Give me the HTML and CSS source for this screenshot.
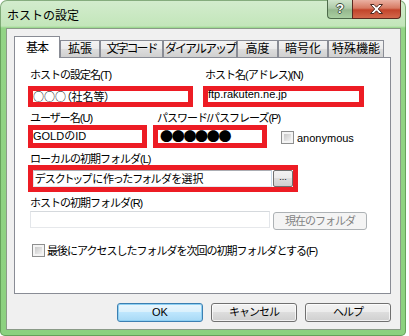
FILE: index.html
```html
<!DOCTYPE html>
<html lang="ja">
<head>
  <meta charset="UTF-8" />
  <title>ホストの設定</title>
  <link rel="stylesheet" href="styles.css">
</head>
<body>

<div class="window">
  <div class="titlebar">
    <span class="title">ホストの設定</span>
    <div class="caption">
      <div class="cap-help"><span>?</span></div>
      <div class="cap-close">
        <svg width="15" height="12" viewBox="0 0 15 12"><path d="M1.5 1.5 H5 L7.5 4.2 L10 1.5 H13.5 L9.3 6 L13.5 10.5 H10 L7.5 7.8 L5 10.5 H1.5 L5.7 6 Z" fill="#fff" stroke="#4b2a22" stroke-width="1"/></svg>
      </div>
    </div>
  </div>

  <div class="client">
    <ul class="tabs">
      <li class="tab active">基本</li>
      <li class="tab w-kakucho">拡張</li>
      <li class="tab kana w-moji">文字コード</li>
      <li class="tab kana w-dial">ダイアルアップ</li>
      <li class="tab w-kodo">高度</li>
      <li class="tab w-ango">暗号化</li>
      <li class="tab w-toku">特殊機能</li>
    </ul>

    <div class="panel">
      <div class="row row-host">
        <div class="field f-name">
          <div class="label">ホストの設定名(T)</div>
          <div class="mark mark-thin"><span class="val jp">○○○（社名等）</span></div>
        </div>
        <div class="field f-addr">
          <div class="label">ホスト名(アドレス)(N)</div>
          <div class="mark mark-thin"><span class="val">ftp.rakuten.ne.jp</span></div>
        </div>
      </div>

      <div class="row row-user">
        <div class="field f-user">
          <div class="label">ユーザー名(U)</div>
          <div class="mark mark-mid"><span class="val">GOLDのID</span></div>
        </div>
        <div class="field f-pass">
          <div class="label">パスワード/パスフレーズ(P)</div>
          <div class="mark mark-mid"><span class="dots">●●●●●●</span></div>
        </div>
        <div class="check anon">
          <span class="box"></span>
          <span class="check-text">anonymous</span>
        </div>
      </div>

      <div class="label l-local">ローカルの初期フォルダ(L)</div>
      <div class="mark mark-local">
        <div class="textbox"><span class="val jp">デスクトップに作ったフォルダを選択</span></div>
        <div class="browse">...</div>
      </div>

      <div class="label l-remote">ホストの初期フォルダ(R)</div>
      <div class="row row-remote">
        <div class="textbox disabled"></div>
        <div class="btn btn-disabled">現在のフォルダ</div>
      </div>

      <div class="check last">
        <span class="box"></span>
        <span class="check-text">最後にアクセスしたフォルダを次回の初期フォルダとする(F)</span>
      </div>
    </div>

    <div class="buttons">
      <div class="btn btn-default">OK</div>
      <div class="btn">キャンセル</div>
      <div class="btn">ヘルプ</div>
    </div>
  </div>
</div>

</body>
</html>
```

FILE: styles.css
```css
* {
  margin: 0;
  padding: 0;
  box-sizing: border-box;
}

body {
  background: #fff;
  font-family: "Liberation Sans", "Noto Sans CJK JP", sans-serif;
  font-size: 11px;
  color: #000;
}

.window {
  width: 406px;
  height: 336px;
  display: flex;
  flex-direction: column;
  padding: 0 5px 6px 6px;
  border-radius: 7px 7px 5px 5px;
  background: linear-gradient(to bottom, #d3ecce 0, #c3e6ba 26px, #93d486 28px, #8cd17f 100%);
  box-shadow: inset 0 0 0 1px rgba(70, 120, 60, 0.55);
}

/* title bar */
.titlebar {
  height: 28px;
  display: flex;
  align-items: flex-start;
}

.title {
  font-size: 12px;
  line-height: 14px;
  padding: 9px 0 0 1px;
  color: #000;
}

.caption {
  margin-left: auto;
  display: flex;
}

.cap-help,
.cap-close {
  height: 19px;
  display: flex;
  align-items: center;
  justify-content: center;
  border: 1px solid #4d6a4a;
  border-top: none;
}

.cap-help {
  width: 25px;
  border-right: none;
  border-radius: 0 0 0 4px;
  background: linear-gradient(to bottom, #d0e4cc 0, #aecaa8 45%, #95b88e 55%, #a9cfa1 100%);
}

.cap-help span {
  font-weight: bold;
  font-size: 13px;
  line-height: 14px;
  color: #fff;
  text-shadow: 1px 0 #3d4f3b, -1px 0 #3d4f3b, 0 1px #3d4f3b, 0 -1px #3d4f3b;
}

.cap-close {
  width: 49px;
  border-color: #5b2a20;
  border-radius: 0 0 4px 0;
  background: linear-gradient(to bottom, #eab1a2 0, #d77a62 45%, #c2442a 55%, #d3684b 100%);
}

/* client area */
.client {
  flex: 1;
  display: flex;
  flex-direction: column;
  border: 1px solid #8a9a87;
  background: #f0f0f0;
  padding: 7px 9px 0 7px;
}

.tabs {
  list-style: none;
  display: flex;
  align-items: flex-end;
  height: 21px;
}

.tab {
  height: 17px;
  line-height: 16px;
  font-size: 12px;
  text-align: center;
  white-space: nowrap;
  border: 1px solid #898c95;
  border-bottom: none;
  background: linear-gradient(to bottom, #f3f3f3 0, #ebebeb 50%, #dddddd 50%, #d0d0d0 100%);
}

.tab.kana {
  letter-spacing: -2px;
}

.tab.active {
  position: relative;
  z-index: 1;
  width: 46px;
  height: 22px;
  margin-bottom: -1px;
  padding-top: 3px;
  background: #fff;
  letter-spacing: -1px;
}

.w-kakucho { width: 40px; }
.w-moji { width: 63px; }
.w-dial { width: 74px; }
.w-kodo { width: 41px; }
.w-ango { width: 50px; }
.w-toku { width: 56px; }

.panel {
  height: 237px;
  border: 1px solid #898c95;
  background: #fff;
  padding: 12px 0 0 13px;
}

.label {
  line-height: 11px;
  height: 11px;
  padding-left: 2px;
  letter-spacing: -1px;
  white-space: nowrap;
}

.row {
  display: flex;
}

.mark {
  border: 5px solid #ed1c24;
  background: #fff;
}

.mark-thin {
  height: 21px;
  margin-top: 5px;
}

.mark-mid {
  height: 23px;
  margin-top: 1px;
}

.val {
  display: block;
  white-space: nowrap;
  line-height: 13px;
}

.mark-thin .val {
  line-height: 11px;
  margin-top: -2px;
}

.val.jp {
  font-family: "Noto Sans CJK JP", sans-serif;
  font-feature-settings: "palt";
}

.mark-thin .val.jp {
  margin-top: 0;
}

.row-host {
  gap: 10px;
}

.f-name { width: 165px; }
.f-addr { width: 161px; }

.row-user {
  margin-top: 6px;
  align-items: flex-end;
}

.f-user { width: 119px; }
.f-pass { width: 114px; margin-left: 6px; }
.f-pass .label { padding-left: 4px; }

.dots {
  display: block;
  font-family: "Noto Sans CJK JP", sans-serif;
  font-size: 13px;
  line-height: 12px;
  letter-spacing: -1.3px;
  padding-left: 2px;
}

.check {
  display: flex;
  align-items: center;
  white-space: nowrap;
}

.box {
  width: 13px;
  height: 13px;
  border: 1px solid #8e8f8f;
  padding: 2px;
  background: linear-gradient(135deg, #c8c8c8, #f2f2f2) content-box, #f4f4f4;
}

.anon {
  margin-left: 14px;
  margin-bottom: 4px;
}

.anon .check-text {
  margin-left: 3px;
}

.l-local {
  margin-top: 6px;
}

.mark-local {
  display: flex;
  gap: 1px;
  width: 270px;
  height: 27px;
}

.textbox {
  width: 239px;
  height: 17px;
  background: #fff;
  border: 1px solid;
  border-color: #abadb3 #c9dbea #e3e9ef #e2e3ea;
  padding-left: 1px;
}

.textbox .val {
  line-height: 14px;
}

.browse {
  width: 20px;
  height: 17px;
  border: 1px solid #707070;
  border-radius: 2px;
  background: linear-gradient(to bottom, #f2f2f2 0, #ebebeb 50%, #dddddd 50%, #cfcfcf 100%);
  font-size: 9px;
  line-height: 13px;
  text-align: center;
}

.l-remote {
  margin-top: 6px;
}

.row-remote {
  margin-top: 2px;
  margin-left: 2px;
  align-items: flex-start;
}

.textbox.disabled {
  width: 240px;
  border-color: #d5d9dd #e3e6ea #e6e8eb #e3e6ea;
}

.btn {
  height: 19px;
  width: 86px;
  border: 1px solid #707070;
  border-radius: 3px;
  background: linear-gradient(to bottom, #f2f2f2 0, #ebebeb 50%, #dddddd 50%, #cfcfcf 100%);
  box-shadow: inset 0 0 0 1px rgba(255, 255, 255, 0.7);
  text-align: center;
  line-height: 17px;
  letter-spacing: -1px;
  white-space: nowrap;
}

.btn-disabled {
  width: 94px;
  height: 18px;
  line-height: 16px;
  margin-top: 1px;
  margin-left: 3px;
  border-color: #adb2b5;
  background: #f4f4f4;
  box-shadow: none;
  color: #838383;
}

.last {
  margin-top: 12px;
  margin-left: 4px;
}

.last .check-text {
  margin-left: 2px;
  letter-spacing: -1px;
}

.buttons {
  display: flex;
  justify-content: flex-end;
  gap: 8px;
  margin-top: 9px;
}

.btn-default {
  border-color: #3c7fb1;
  background: linear-gradient(to bottom, #eaf6fd 0, #d9f0fc 50%, #bee6fd 50%, #a7d9f5 100%);
  box-shadow: inset 0 0 0 1px #8ed0f3;
  letter-spacing: 0;
}
```
